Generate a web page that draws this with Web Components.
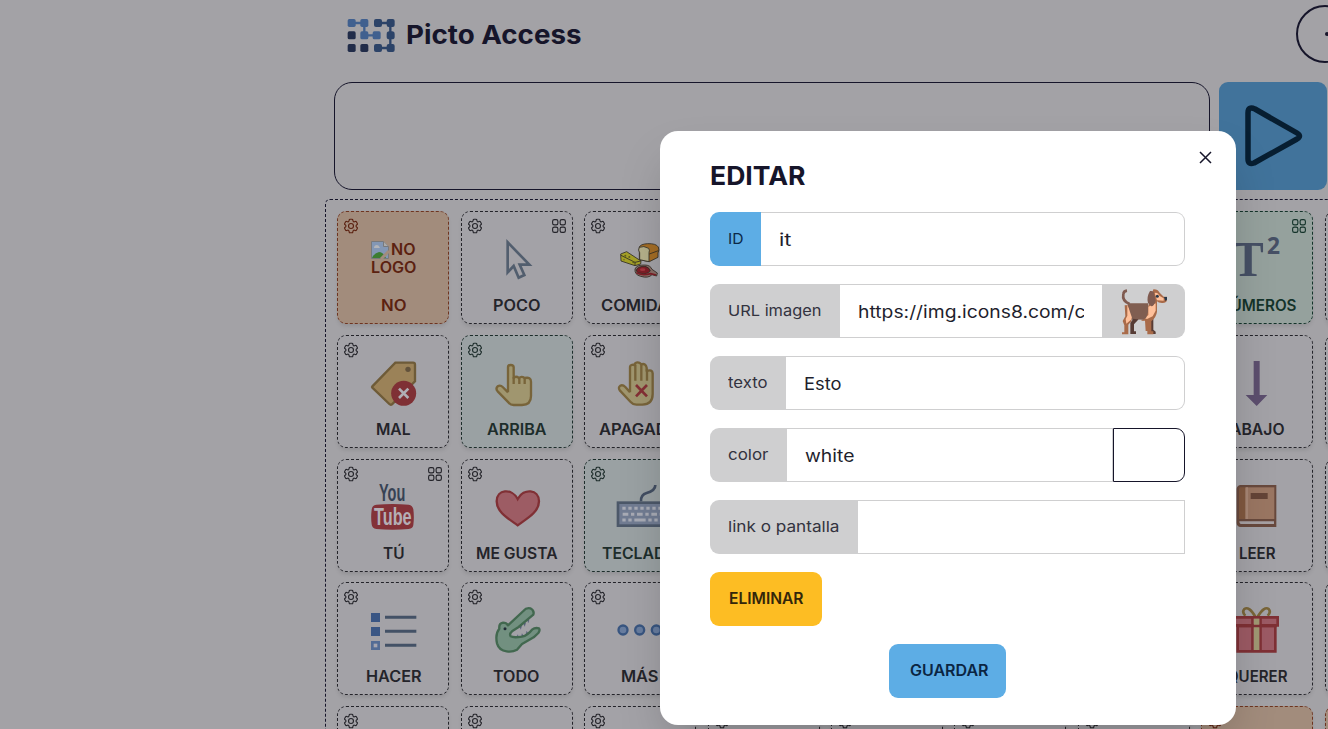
<!DOCTYPE html>
<html lang="es">
<head>
<meta charset="utf-8">
<title>Picto Access</title>
<style>
html,body{margin:0;height:100%;overflow:hidden}
body{background:#a3a2a6;font-family:Inter,"Open Sans",sans-serif;color:#16152a}
</style>
</head>
<body>
<picto-app></picto-app>
<script>
const ICONS = {
cursor:['104 114','<path d="M157 142V232L175 213L190 248L207 240L193 209H222Z" fill="none" stroke="#525e6e" stroke-width="8"/>'],
food:['475 114','<g stroke="#302d25" stroke-width="2.5"><path d="M554 156Q558 147 579 146Q604 145 611 156Q615 165 610 174V187L584 200L554 194Z" fill="#a46d25"/><path d="M554 157Q567 151 582 160Q586 165 583 173V200L555 194V173Q549 165 554 157Z" fill="#b5b08a"/><path d="M584 177L611 167" fill="none"/><path d="M498 177L516 170L559 198L558 207L541 212L499 198Z" fill="#a4a027"/><path d="M499 181L541 202L558 198M541 202V211" fill="none"/><path d="M541 222Q546 209 570 210Q587 210 592 223L608 234L606 243L592 239Q581 251 558 244Q539 239 541 222Z" fill="#8a6f68"/><path d="M545 225Q551 213 571 214Q583 216 587 228Q577 239 559 235Q545 233 545 225Z" fill="#7e1e27"/><path d="M545 233Q560 243 588 236L604 240" fill="none" stroke="#7e1e27" stroke-width="5"/></g><ellipse cx="564" cy="224" rx="8" ry="4" fill="#a3363f"/><circle cx="512" cy="182" r="3" fill="#615f18"/><circle cx="524" cy="186" r="3" fill="#615f18"/><circle cx="536" cy="202" r="3" fill="#615f18"/><circle cx="508" cy="194" r="2" fill="#615f18"/>'],
tag:['123 81','<path d="M142 169L211 98H264Q270 98 270 104V154L201 223Q197 226 193 222L142 173Q140 171 142 169Z" fill="#9b8258" stroke="#6e5b38" stroke-width="7"/><circle cx="249" cy="118" r="8" fill="#62523b"/><circle cx="236" cy="190" r="37.500" fill="#7f3035"/><path d="M222 176L250 204M250 176L222 204" stroke="#b0aeb4" stroke-width="8"/>'],
up:['104 81','<path d="M158 187V112Q158 105 166 105Q175 105 175 112V144Q181 137 191 144Q198 137 208 144Q227 140 227 155V198Q227 225 200 225H175Q166 225 160 218L127 184Q120 176 127 169Q135 164 142 171L158 187" fill="#a0966f" stroke="#78643a" stroke-width="7" stroke-linejoin="round"/><path d="M175 142V162M192 144V162M208 144V162" stroke="#78643a" stroke-width="7"/>'],
stop:['475 81','<path d="M526 187V111Q527 102 541 105V100Q551 93 560 103Q573 99 576 113V123Q593 117 594 130V192Q594 223 563 224H545Q535 224 528 216L496 182Q489 173 497 167Q504 163 512 171L526 187" fill="#a0966f" stroke="#78643a" stroke-width="7" stroke-linejoin="round"/><path d="M542 104V152M560 104V152M577 116V152" stroke="#78643a" stroke-width="7"/><path d="M544 165L577 199M577 165L544 199" stroke="#843035" stroke-width="8"/>'],
youtube:['123 78','<text x="162" y="139" font-family="Liberation Sans" font-weight="700" font-size="69" textLength="79" lengthAdjust="spacingAndGlyphs" fill="#374254">You</text><path d="M154 149Q203 145 251 149Q263 151 265 163Q268 187 265 210Q264 221 251 222Q203 226 154 222Q141 220 140 208Q137 187 140 164Q141 151 154 149Z" fill="#833238"/><text x="147" y="210" font-family="Liberation Sans" font-weight="700" font-size="74" textLength="113" lengthAdjust="spacingAndGlyphs" fill="#b5afb5">Tube</text>'],
heart:['104 78','<path d="M187 211C158 190 124 171 124 139C124 103 169 98 187 132C205 98 251 103 251 139C251 171 216 190 187 211Z" fill="#9d5c64" stroke="#803035" stroke-width="7"/>'],
keyboard:['475 78','<path d="M559 139Q558 119 576 114Q602 107 602 90" fill="none" stroke="#424e62" stroke-width="8"/><rect x="490" y="143" width="132" height="69" fill="#717c92" stroke="#4c5869" stroke-width="8"/><path d="M503 160H616" stroke="#a8abb5" stroke-width="9" stroke-dasharray="10 8"/><path d="M504 178H616" stroke="#a8abb5" stroke-width="9" stroke-dasharray="17 8 10 8"/><path d="M503 195H616" stroke="#a8abb5" stroke-width="9" stroke-dasharray="10 8 10 8 34 8"/>'],
list:['123 81','<path d="M138 108h27v27h-27zM138 150h27v27h-27z" fill="#3a5684"/><rect x="142" y="196" width="19" height="19" fill="#a5a5b0" stroke="#536c95" stroke-width="8"/><path d="M180 121H274M180 163H274M180 205H274" stroke="#435166" stroke-width="9"/>'],
croc:['494 81','<path d="M606 128l3 9 2-9zM595 139l3 9 3-10zM583 148l3 9 3-9zM574 182l3-9 4 9zM588 179l2-9 5 8zM602 172l2-9 5 7z" fill="#545e79" stroke="#545e79"/><path d="M522 155Q520 139 533 137Q543 137 548 145L594 102Q603 91 615 94Q628 101 624 113L606 128L580 150L560 163Q551 171 556 178Q564 183 590 179Q607 175 620 158Q629 151 641 154Q645 160 639 168L625 181L590 201L575 218Q561 226 544 223Q521 220 515 199Q509 170 522 155Z" fill="#729080" stroke="#42684f" stroke-width="7" stroke-linejoin="round"/><circle cx="539" cy="155" r="4.500" fill="#202c35"/>'],
dots:['865 81','<g fill="#687d9f" stroke="#385580" stroke-width="7"><circle cx="895" cy="159" r="13.500"/><circle cx="945" cy="159" r="13.500"/><circle cx="995" cy="159" r="13.500"/></g>'],
numbers:['424 339','<text x="432" y="469" font-family="Liberation Serif" font-weight="700" font-size="153" textLength="93" lengthAdjust="spacingAndGlyphs" fill="#465065">T</text><text x="535" y="402" font-family="Open Sans" font-weight="700" font-size="69" textLength="39" lengthAdjust="spacingAndGlyphs" fill="#465065">2</text>'],
down:['394 81','<path d="M465 93H483V195H506L474 228L441 195H465Z" fill="#5c4e6e"/>'],
book:['394 453','<path d="M426 465H533V591H426Q414 590 414 578V477Q415 466 426 465Z" fill="#68493d"/><path d="M423 472H439V567H421V477Z" fill="#80583f"/><path d="M439 472H527V567H439Z" fill="#9a7662"/><path d="M445 472V567" stroke="#aa8a79" stroke-width="5"/><path d="M422 574H526V582H426Q422 582 422 574Z" fill="#a7a1a3"/><path d="M456 489H507V507H456Z" fill="#644437"/>'],
gift:['394 105','<path d="M471 145Q451 110 437 120Q429 130 440 140M476 145Q497 110 510 120Q518 130 507 140" fill="none" stroke="#796538" stroke-width="8"/><path d="M417 171H530V247H417Z" fill="#9c5a64" stroke="#7f3035" stroke-width="8"/><path d="M408 145H537V169H408Z" fill="#9c5a64" stroke="#7f3035" stroke-width="8"/><path d="M474 149V243" stroke="#a09873" stroke-width="18"/><path d="M461 142V247M486 142V247M414 171H534" stroke="#7f3035" stroke-width="7"/>'],
dog:['81 491','<path d="M119 551Q96 543 100 521Q101 512 111 511" fill="none" stroke="#805b50" stroke-width="8"/><path d="M126 585H146V597L132 612V633H138V641H121V607L127 600ZM174 594H190V628L197 634V641H184L174 602Z" fill="#573c35"/><path d="M104 555L122 554L127 588L124 603L115 613V642H96V636H103V615L98 602L106 588Z" fill="#a96b49"/><path d="M112 553L122 573L128 585L123 598L109 610L107 596L112 586Z" fill="#ffc09a"/><path d="M112 549H174L170 600L127 595L119 572Z" fill="#805e51"/><path d="M190 507Q203 506 209 517L221 529H231V540Q228 549 216 548Q205 548 201 543V574Q199 590 184 603V633H190V642H172V632H167L165 601L152 602L165 595L176 552Z" fill="#a96b49"/><path d="M188 553L197 549V571L188 588L171 596L164 594L175 584V559Z" fill="#ffc09a"/><path d="M194 518Q204 515 208 526L221 534V541L201 540Z" fill="#ffc09a"/><path d="M180 512Q194 510 193 524L197 541Q191 559 184 558L174 548Q169 530 180 512Z" fill="#805b50"/><path d="M174 549V575L168 594L147 597L162 565Z" fill="#805e51"/><circle cx="202" cy="528" r="4.500" fill="#28384a"/><path d="M222 530h9v8l-5 4z" fill="#28384a"/>'],
peek:['0 0','']
};
const GEAR='<svg viewBox="0 0 24 24"><path d="M9.594 3.94c.09-.542.56-.94 1.11-.94h2.593c.55 0 1.02.398 1.11.94l.213 1.281c.063.374.313.686.645.87.074.04.147.083.22.127.325.196.72.257 1.075.124l1.217-.456a1.125 1.125 0 0 1 1.37.49l1.296 2.247a1.125 1.125 0 0 1-.26 1.431l-1.003.827c-.293.241-.438.613-.43.992a7.723 7.723 0 0 1 0 .255c-.008.378.137.75.43.991l1.004.827c.424.35.534.955.26 1.43l-1.298 2.247a1.125 1.125 0 0 1-1.369.491l-1.217-.456c-.355-.133-.75-.072-1.076.124a6.47 6.47 0 0 1-.22.128c-.331.183-.581.495-.644.869l-.213 1.281c-.09.543-.56.94-1.11.94h-2.594c-.55 0-1.019-.398-1.11-.94l-.213-1.281c-.062-.374-.312-.686-.644-.87a6.52 6.52 0 0 1-.22-.127c-.325-.196-.72-.257-1.076-.124l-1.217.456a1.125 1.125 0 0 1-1.369-.49l-1.297-2.247a1.125 1.125 0 0 1 .26-1.431l1.004-.827c.292-.24.437-.613.43-.991a6.932 6.932 0 0 1 0-.255c.007-.38-.138-.751-.43-.992l-1.004-.827a1.125 1.125 0 0 1-.26-1.43l1.297-2.247a1.125 1.125 0 0 1 1.37-.491l1.216.456c.356.133.751.072 1.076-.124.072-.044.146-.086.22-.128.332-.183.582-.495.644-.869l.214-1.28Z"/><circle cx="12" cy="12" r="3.300"/></svg>';
const FOLDER='<svg viewBox="0 0 24 24"><rect x="3.500" y="3.500" width="7" height="7" rx="2.300"/><rect x="13.500" y="3.500" width="7" height="7" rx="2.300"/><rect x="3.500" y="13.500" width="7" height="7" rx="2.300"/><rect x="13.500" y="13.500" width="7" height="7" rx="2.300"/></svg>';

class Base extends HTMLElement{
  paint(html){this.attachShadow({mode:'open'}).innerHTML=html}
}
/* Widens or narrows its text to the width given in the w attribute. */
customElements.define('fit-text',class extends Base{
  connectedCallback(){
    this.paint('<style>:host{display:inline-block;white-space:nowrap}span{display:inline-block;transform-origin:0 50%}</style><span><slot></slot></span>');
    const w=+this.getAttribute('w'),s=this.shadowRoot.querySelector('span');
    if(w){const now=s.getBoundingClientRect().width;this.style.width=w+'px';s.style.transform=`scaleX(${(w+1.500)/now})`;s.style.marginLeft='-.75px'}
  }
});
customElements.define('picto-icon',class extends Base{
  connectedCallback(){
    const i=ICONS[this.getAttribute('name')];
    this.paint('<style>:host,svg{display:block;width:54px;height:54px}</style>'+(i?`<svg viewBox="${i[0]} 162 162">${i[1]}</svg>`:''));
  }
});
customElements.define('picto-card',class extends Base{
  connectedCallback(){
    const a=n=>this.getAttribute(n);
    const art=a('icon')==='missing'
      ?`<div class="missing"><svg width="18" height="18" viewBox="0 0 18 18"><path d="M.5.5H12.500L17.500 5.500V17.500H.5Z" fill="#8397b5" stroke="#78797c"/><path d="M12.500.5V5.500H17.500" fill="#aaa" stroke="#78797c"/><path d="M3 7Q3 4 6 4Q8 4 9 7Z" fill="#b3b5ba"/><path d="M1 17Q3 12 8 11Q12 11 15 17Z" fill="#3c7d32"/><path d="M10 18L18 10" stroke="#a28c7c" stroke-width="3"/></svg><fit-text w="23">NO</fit-text><br><fit-text w="44">LOGO</fit-text></div>`
      :`<picto-icon name="${a('icon')}"></picto-icon>`;
    this.paint(`<style>
:host{display:grid;grid-template-rows:20px 55px 1fr;justify-items:center;box-sizing:border-box;width:112px;height:113px;border:1px dashed #24242a;border-radius:9px;color:#24242a;background:#a3a2a7;box-shadow:0 3px 4px -1px #0000001c;position:relative;font:600 15.300px/18px Inter,sans-serif}
:host([tone=orange]){background:#a28c7c;color:#5b2110;border-color:#6e3420}
:host([tone=teal]){background:#9aa1a3;color:#1d2d2b;border-color:#1d2d2b}
:host([tone=green]){background:#95a19d;color:#14332a;border-color:#14332a}
.tools{display:flex;justify-content:space-between;width:102px;padding:5px 4px 0;box-sizing:content-box}
.tools svg{width:18px;height:18px;fill:none;stroke:currentColor;stroke-width:1.500}
.missing{width:54px;padding:9px 0 0 5px;box-sizing:border-box;white-space:nowrap}.missing svg{vertical-align:-4px;margin-right:2px}
picto-icon{margin-top:1px}.label{padding-top:10px}
</style><div class="tools">${GEAR}${this.hasAttribute('folder')?FOLDER:''}</div>${art}<div class="label"><fit-text w="${a('w')||''}">${a('label')||''}</fit-text></div>`);
  }
});
customElements.define('picto-board',class extends Base{
  connectedCallback(){
    const e=['','',0],rows=[
[['missing','NO',24,'orange'],['cursor','POCO',46,'',1],['food','COMIDAS',77],e,e,e,e,['numbers','NÚMEROS',76,'green',1],e],
[['tag','MAL',33],['up','ARRIBA',58,'teal'],['stop','APAGADO',80],e,e,e,e,['down','ABAJO',53],e],
[['youtube','TÚ',20,'',1],['heart','ME GUSTA',80],['keyboard','TECLADO',74,'teal'],e,e,e,e,['book','LEER',35],e],
[['list','HACER',54],['croc','TODO',45],['dots','MÁS',36],e,e,e,e,['gift','QUERER',59],e],
[e,e,e,e,e,e,e,['','',0,'orange'],['','',0,'orange']]];
    this.paint(`<style>:host{display:grid;grid-template-columns:repeat(9,112px);gap:10.800px 11.450px;padding:11px 11.300px;border:1px dashed #16152a;border-radius:5px;width:1120px}</style>`+
    rows.flat().map(c=>`<picto-card icon="${c[0]}" label="${c[1]}" w="${c[2]||''}" tone="${c[3]||''}" ${c[4]?'folder':''}></picto-card>`).join(''));
  }
});
customElements.define('app-header',class extends Base{
  connectedCallback(){this.paint(`<style>
:host{display:flex;align-items:center;height:68px;padding-left:22px;width:1007px}
.logo{display:block;width:49px;height:36px;margin-top:3px}
h1{flex:1;margin:2px 0 0 11px;font:700 26px/36px Inter,sans-serif}
.menu{box-sizing:border-box;width:58px;height:58px;flex:none;border:2px solid #16152a;border-radius:50%;display:flex;align-items:center;padding-left:27px}
.menu i{width:4px;height:4px;border-radius:50%;background:#16152a}
</style><svg class="logo" viewBox="82 54 147 108"><g fill="none" stroke="#40608f" stroke-width="7"><path d="M97 69H134V106H170"/><path d="M176 69H212V144H176" stroke="#2c4368"/></g><g fill="#40608f"><rect x="84" y="57" width="24" height="24" rx="5"/><rect x="122" y="57" width="24" height="24" rx="5"/><rect x="122" y="94" width="24" height="24" rx="5"/><rect x="159" y="94" width="24" height="24" rx="5"/></g><g fill="#2c4368"><rect x="163" y="57" width="24" height="24" rx="6"/><rect x="201" y="57" width="24" height="24" rx="6"/><rect x="201" y="94" width="24" height="24" rx="8"/><rect x="163" y="132" width="24" height="24" rx="6"/><rect x="201" y="132" width="24" height="24" rx="6"/></g><g fill="#212c49"><rect x="84" y="94" width="24" height="24" rx="5"/><rect x="84" y="132" width="24" height="24" rx="5"/><rect x="122" y="132" width="24" height="24" rx="5"/></g></svg>
<h1><fit-text w="174">Picto Access</fit-text></h1><div class="menu"><i></i></div>`)}
});
customElements.define('phrase-bar',class extends Base{
  connectedCallback(){this.paint(`<style>
:host{display:flex;gap:9px;padding:14px 0 9px 9px;height:108px}
.box{box-sizing:border-box;width:876px;border:1px solid #16152a;border-radius:18px;flex:none}
.play{width:108px;flex:none;background:#41739b;border-radius:9px}
svg{display:block}
</style><div class="box"></div><div class="play"><svg width="108" height="108" viewBox="0 0 108 108"><path d="M29 31V77Q29 83 35 81L78 57Q83 54 78 51L36 27Q29 24 29 31Z" fill="none" stroke="#071e31" stroke-width="5.500" stroke-linejoin="round"/></svg></div>`)}
});
customElements.define('form-field',class extends Base{
  connectedCallback(){
    const a=n=>this.getAttribute(n);
    this.paint(`<style>
:host{display:flex;height:54px;color:#1f1f2e}
.label{width:${a('lw')}px;box-sizing:border-box;padding-left:19px;background:#cfcfd0;display:flex;align-items:center;border-radius:9px 0 0 9px;font:400 15px/22px Inter,sans-serif;flex:none;color:#33333f}
:host([primary]) .label{background:#5dade5;color:#0c2947}
.value{flex:1;min-width:0;box-sizing:border-box;border:1px solid #cfcfd0;border-left:0;padding:2px 18px 0;display:flex;align-items:center;font:400 17.200px/26px Inter,sans-serif;border-radius:0 9px 9px 0}
:host([square]) .value{border-radius:0}
.clip{overflow:hidden;flex:1;padding-left:1px}
</style><div class="label"><fit-text w="${a('tw')}">${a('label')}</fit-text></div><div class="value"><div class="clip">${a('value')?`<fit-text w="${a('vw')}">${a('value')}</fit-text>`:''}</div></div><slot></slot>`)}
});
customElements.define('edit-dialog',class extends Base{
  connectedCallback(){this.paint(`<style>
:host{display:flex;flex-direction:column;gap:18px;box-sizing:border-box;width:576px;height:594px;padding:27px 51px 27px 50px;border-radius:18px;background:#fff;box-shadow:0 25px 50px -12px #00000040;position:relative}
h2{margin:0 0 0 1px;height:36px;font:700 26px/36px Inter,sans-serif;color:#16152a}
.close{position:absolute;left:539px;top:20px}
.thumb{width:82px;box-sizing:border-box;background:#cfcfd0;border-radius:0 9px 9px 0;padding-left:14px;flex:none}
.swatch{width:72px;box-sizing:border-box;border:1px solid #16152a;border-radius:0 9px 9px 0;flex:none}
button{height:54px;border:0;border-radius:9px;padding:0;font:600 15.300px/20px Inter,sans-serif;flex:none}
.del{width:112px;background:#fdbd23;color:#33260a}.save{width:117px;align-self:center;background:#5dade5;color:#0b2542}
</style><svg class="close" width="13" height="13" viewBox="0 0 13 13"><path d="M1 1L12 12M12 1L1 12" stroke="#16152a" stroke-width="1.500"/></svg>
<h2><fit-text w="94">EDITAR</fit-text></h2>
<form-field primary label="ID" lw="51" tw="14" value="it" vw="11"></form-field>
<form-field square label="URL imagen" lw="130" tw="92" value="https://img.icons8.com/c" vw="226"><div class="thumb"><picto-icon name="dog"></picto-icon></div></form-field>
<form-field label="texto" lw="76" tw="38" value="Esto" vw="36"></form-field>
<form-field square label="color" lw="77" tw="39" value="white" vw="48"><div class="swatch"></div></form-field>
<form-field square label="link o pantalla" lw="148" tw="110"></form-field>
<button class="del"><fit-text w="73">ELIMINAR</fit-text></button>
<button class="save"><fit-text w="77">GUARDAR</fit-text></button>`)}
});
customElements.define('picto-app',class extends Base{
  connectedCallback(){this.paint(`<style>
:host{display:block;height:729px;overflow:hidden;position:relative}
main{padding-left:325px}
.layer{position:absolute;inset:0;padding:131px 0 0 660px}
</style><main><app-header></app-header><phrase-bar></phrase-bar><picto-board></picto-board></main><div class="layer"><edit-dialog></edit-dialog></div>`)}
});
</script>
</body>
</html>
